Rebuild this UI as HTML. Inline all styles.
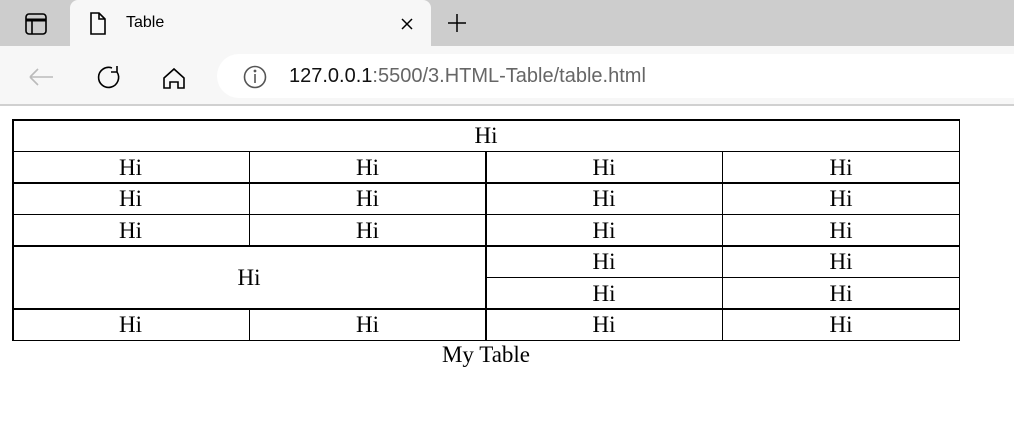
<!DOCTYPE html>
<html><head><style>
body{margin:0;width:1014px;height:421px;background:#fff;position:relative;overflow:hidden;font-family:"Liberation Serif",serif}
.a{position:absolute}
.h{position:absolute;background:#000;height:1px}
.v{position:absolute;background:#000;width:1px}
.c{position:absolute;font-size:23px;text-align:center;line-height:31px;color:#000}
</style></head><body>
<div class="a" style="left:0;top:0;width:1014px;height:46px;background:#cdcdcd"></div>
<div class="a" style="left:70px;top:0;width:361px;height:48px;background:#f7f7f7;border-radius:8px 8px 0 0"></div>
<div class="a" style="left:0;top:46px;width:1014px;height:58px;background:#f7f7f7"></div>
<div class="a" style="left:0;top:104px;width:1014px;height:2px;background:#d0d0d0"></div>
<div class="a" style="left:217px;top:54px;width:820px;height:44px;background:#fff;border-radius:22px"></div>
<svg class="a" style="left:0;top:0" width="500" height="106" fill="none" stroke="#000" stroke-width="1.6">
<rect x="26" y="14" width="20" height="20" rx="3"/><line x1="26" y1="20" x2="46" y2="20" stroke-width="3"/><line x1="32" y1="20" x2="32" y2="34"/>
<path d="M91 13h8l6 6v15h-14z M99 13v6h6"/>
<path d="M402 19l10 10M412 19l-10 10" stroke-width="1.5"/>
<path d="M457 14v18M448 23h18" stroke-width="1.5"/>
<path d="M53 77H30M30 77l8-8M30 77l8 8" stroke="#bbb"/>
<path d="M117 72a10 10 0 1 1 -5 -4M117 66v6h-6"/>
<path d="M164 78l10-9 10 9v10h-6v-6h-8v6h-6z"/>
<circle cx="255" cy="77" r="10.5" stroke="#555"/><line x1="255" y1="74" x2="255" y2="83" stroke="#555"/><circle cx="255" cy="71" r="0.6" fill="#555" stroke="#555"/>
</svg>
<div class="a" style="left:126px;top:14px;font:16px 'Liberation Sans',sans-serif;color:#000">Table</div>
<div class="a" style="left:289px;top:65px;font:20px 'Liberation Sans',sans-serif;color:#666"><span style="color:#111">127.0.0.1</span>:5500/3.HTML-Table/table.html</div>

<div class="h" style="left:12px;top:119px;width:948px;height:2px"></div>
<div class="h" style="left:12px;top:151px;width:948px"></div>
<div class="h" style="left:12px;top:182px;width:948px;height:2px"></div>
<div class="h" style="left:12px;top:214px;width:948px"></div>
<div class="h" style="left:12px;top:245px;width:948px;height:2px"></div>
<div class="h" style="left:486px;top:277px;width:474px"></div>
<div class="h" style="left:12px;top:308px;width:948px;height:2px"></div>
<div class="h" style="left:12px;top:340px;width:948px"></div>
<div class="v" style="left:12px;top:119px;height:222px;width:2px"></div>
<div class="v" style="left:959px;top:119px;height:222px"></div>
<div class="v" style="left:485px;top:151px;height:190px;width:2px"></div>
<div class="v" style="left:249px;top:151px;height:95px"></div>
<div class="v" style="left:249px;top:309px;height:32px"></div>
<div class="v" style="left:722px;top:151px;height:190px"></div>

<div class="c" style="left:12px;top:120px;width:948px">Hi</div>
<div class="c" style="left:12px;top:152px;width:237px">Hi</div><div class="c" style="left:249px;top:152px;width:237px">Hi</div><div class="c" style="left:486px;top:152px;width:236px">Hi</div><div class="c" style="left:722px;top:152px;width:238px">Hi</div>
<div class="c" style="left:12px;top:183px;width:237px">Hi</div><div class="c" style="left:249px;top:183px;width:237px">Hi</div><div class="c" style="left:486px;top:183px;width:236px">Hi</div><div class="c" style="left:722px;top:183px;width:238px">Hi</div>
<div class="c" style="left:12px;top:215px;width:237px">Hi</div><div class="c" style="left:249px;top:215px;width:237px">Hi</div><div class="c" style="left:486px;top:215px;width:236px">Hi</div><div class="c" style="left:722px;top:215px;width:238px">Hi</div>
<div class="c" style="left:12px;top:262px;width:474px">Hi</div>
<div class="c" style="left:486px;top:246px;width:236px">Hi</div><div class="c" style="left:722px;top:246px;width:238px">Hi</div>
<div class="c" style="left:486px;top:278px;width:236px">Hi</div><div class="c" style="left:722px;top:278px;width:238px">Hi</div>
<div class="c" style="left:12px;top:309px;width:237px">Hi</div><div class="c" style="left:249px;top:309px;width:237px">Hi</div><div class="c" style="left:486px;top:309px;width:236px">Hi</div><div class="c" style="left:722px;top:309px;width:238px">Hi</div>
<div class="c" style="left:12px;top:339px;width:948px">My Table</div>
</body></html>
